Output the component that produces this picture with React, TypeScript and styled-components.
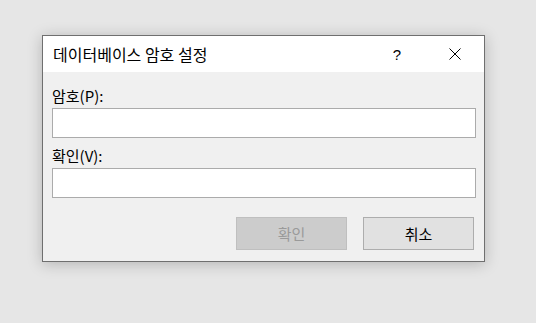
import styled, { createGlobalStyle } from "styled-components";

const GlobalStyle = createGlobalStyle`
  html, body {
    margin: 0;
    padding: 0;
    background: #e6e6e6;
  }
  body {
    font-family: "Noto Sans CJK KR", "Noto Sans", sans-serif;
  }
`;

const Page = styled.div`
  width: 536px;
  height: 323px;
  padding: 35px 0 0 42px;
  box-sizing: border-box;
`;

const Dialog = styled.div`
  width: 443px;
  box-sizing: border-box;
  border: 1px solid #6f6f6f;
  background: #f0f0f0;
  box-shadow: 0 2px 14px rgba(0, 0, 0, 0.22);
`;

const TitleBar = styled.div`
  height: 36px;
  background: #ffffff;
  display: flex;
  align-items: center;
  padding-left: 10px;
`;

const Title = styled.div`
  flex: 1;
  font-size: 16px;
  color: #000;
  line-height: 20px;
`;

const HelpButton = styled.div`
  width: 24px;
  text-align: center;
  font-family: "Liberation Sans", sans-serif;
  font-size: 15px;
  color: #000;
  margin-right: 23px;
`;

const CloseButton = styled.div`
  width: 46px;
  height: 36px;
  margin-right: 6px;
  display: flex;
  align-items: center;
  justify-content: center;
`;

const Body = styled.div`
  padding: 14px 8px 11px 9px;
  display: flex;
  flex-direction: column;
`;

const Label = styled.label<{ $top?: number }>`
  height: 22px;
  line-height: 20px;
  font-size: 15px;
  color: #000;
  margin-top: ${(p) => p.$top ?? 0}px;
`;

const Input = styled.input`
  height: 30px;
  box-sizing: border-box;
  border: 1px solid #ababab;
  background: #fff;
  outline: none;
  margin: 0;
`;

const Buttons = styled.div`
  display: flex;
  justify-content: flex-end;
  gap: 16px;
  margin-top: 19px;
  padding-right: 2px;
`;

const Button = styled.button<{ $disabled?: boolean }>`
  width: 111px;
  height: 33px;
  box-sizing: border-box;
  border: 1px solid ${(p) => (p.$disabled ? "#bfbfbf" : "#adadad")};
  background: ${(p) => (p.$disabled ? "#cccccc" : "#e1e1e1")};
  color: ${(p) => (p.$disabled ? "#9a9a9a" : "#000")};
  font-family: "Noto Sans CJK KR", "Noto Sans", sans-serif;
  font-size: 15px;
  padding: 0;
  margin: 0;
`;

export default function App() {
  return (
    <Page>
      <GlobalStyle />
      <Dialog>
        <TitleBar>
          <Title>데이터베이스 암호 설정</Title>
          <HelpButton>?</HelpButton>
          <CloseButton>
            <svg width="12" height="12" viewBox="0 0 12 12">
              <path d="M0.5 0.5 L11.5 11.5 M11.5 0.5 L0.5 11.5" stroke="#000" strokeWidth="1" />
            </svg>
          </CloseButton>
        </TitleBar>
        <Body>
          <Label>암호(P):</Label>
          <Input type="password" />
          <Label $top={8}>확인(V):</Label>
          <Input type="password" />
          <Buttons>
            <Button $disabled disabled>
              확인
            </Button>
            <Button>취소</Button>
          </Buttons>
        </Body>
      </Dialog>
    </Page>
  );
}
